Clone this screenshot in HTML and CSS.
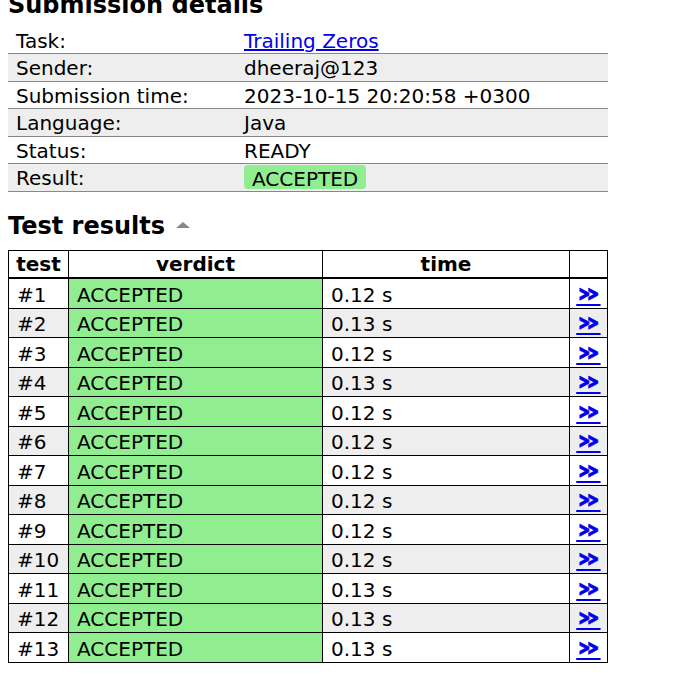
FILE: index.html
```html
<!DOCTYPE html>
<html>
<head>
<meta charset="utf-8">
<link rel="stylesheet" href="styles.css">
</head>
<body>
<h2 class="title first">Submission details</h2>
<table class="details">
  <tr><td class="label">Task:</td><td><a href="#">Trailing Zeros</a></td></tr>
  <tr class="alt"><td class="label">Sender:</td><td>dheeraj@123</td></tr>
  <tr><td class="label">Submission time:</td><td>2023-10-15 20:20:58 +0300</td></tr>
  <tr class="alt"><td class="label">Language:</td><td>Java</td></tr>
  <tr><td class="label">Status:</td><td>READY</td></tr>
  <tr class="alt"><td class="label">Result:</td><td><span class="badge">ACCEPTED</span></td></tr>
</table>
<h2 class="title second">Test results<span class="toggle"></span></h2>
<table class="tests">
  <thead>
    <tr><th class="c-test">test</th><th class="c-verdict">verdict</th><th class="c-time">time</th><th class="c-link"></th></tr>
  </thead>
  <tbody>
    <tr><td>#1</td><td class="ok">ACCEPTED</td><td>0.12 s</td><td class="lk"><a href="#">»</a></td></tr>
    <tr class="alt"><td>#2</td><td class="ok">ACCEPTED</td><td>0.13 s</td><td class="lk"><a href="#">»</a></td></tr>
    <tr><td>#3</td><td class="ok">ACCEPTED</td><td>0.12 s</td><td class="lk"><a href="#">»</a></td></tr>
    <tr class="alt"><td>#4</td><td class="ok">ACCEPTED</td><td>0.13 s</td><td class="lk"><a href="#">»</a></td></tr>
    <tr><td>#5</td><td class="ok">ACCEPTED</td><td>0.12 s</td><td class="lk"><a href="#">»</a></td></tr>
    <tr class="alt"><td>#6</td><td class="ok">ACCEPTED</td><td>0.12 s</td><td class="lk"><a href="#">»</a></td></tr>
    <tr><td>#7</td><td class="ok">ACCEPTED</td><td>0.12 s</td><td class="lk"><a href="#">»</a></td></tr>
    <tr class="alt"><td>#8</td><td class="ok">ACCEPTED</td><td>0.12 s</td><td class="lk"><a href="#">»</a></td></tr>
    <tr><td>#9</td><td class="ok">ACCEPTED</td><td>0.12 s</td><td class="lk"><a href="#">»</a></td></tr>
    <tr class="alt"><td>#10</td><td class="ok">ACCEPTED</td><td>0.12 s</td><td class="lk"><a href="#">»</a></td></tr>
    <tr><td>#11</td><td class="ok">ACCEPTED</td><td>0.13 s</td><td class="lk"><a href="#">»</a></td></tr>
    <tr class="alt"><td>#12</td><td class="ok">ACCEPTED</td><td>0.13 s</td><td class="lk"><a href="#">»</a></td></tr>
    <tr><td>#13</td><td class="ok">ACCEPTED</td><td>0.13 s</td><td class="lk"><a href="#">»</a></td></tr>
  </tbody>
</table>
</body>
</html>
```
FILE: styles.css
```css
html, body {
  background: #fff;
}
body {
  margin: 0;
  padding: 0 8px;
  font-family: "DejaVu Sans", Verdana, sans-serif;
  font-size: 20px;
  color: #000;
  overflow: hidden;
}
a {
  color: #0000ee;
  text-decoration: underline;
}
.title {
  font-size: 24px;
  font-weight: bold;
  line-height: 28px;
  margin: 0;
}
.first {
  margin-top: -9px;
  margin-bottom: 7.5px;
}
.second {
  margin-top: 20px;
  margin-bottom: 10.5px;
}
.toggle {
  display: inline-block;
  width: 0;
  height: 0;
  margin-left: 11px;
  border-left: 7px solid transparent;
  border-right: 7px solid transparent;
  border-bottom: 6px solid #888;
  vertical-align: 6px;
}
.details {
  width: 600px;
  border-collapse: separate;
  border-spacing: 0;
  table-layout: fixed;
}
.details td {
  padding: 3px 8px 0.5px;
  line-height: 23px;
  border-bottom: 1px solid #888;
  vertical-align: top;
  white-space: nowrap;
}
.details td.label {
  width: 228px;
  box-sizing: border-box;
}
.details tr.alt td {
  background: #eee;
}
.badge {
  display: inline-block;
  box-sizing: border-box;
  height: 23.6px;
  margin-top: -1.8px;
  padding: 4.3px 8px 0;
  line-height: 19.5px;
  background: #90ee90;
  border-radius: 4px;
  vertical-align: top;
}
.tests {
  width: 600px;
  border-collapse: separate;
  border-spacing: 0;
  table-layout: fixed;
  border-left: 1px solid #000;
  border-top: 1px solid #000;
}
.tests th, .tests td {
  box-sizing: border-box;
  border-right: 1px solid #000;
  border-bottom: 1px solid #000;
  white-space: nowrap;
}
.tests th {
  font-weight: bold;
  text-align: center;
  padding: 2px 0 1px;
  line-height: 23px;
  border-bottom-width: 2px;
}
.tests td {
  padding: 3.5px 8px 0.5px;
  line-height: 24.5px;
  text-align: left;
}
.c-test { width: 60px; }
.c-verdict { width: 254px; }
.c-time { width: 247px; }
.c-link { width: 38px; }
.tests tr.alt td {
  background: #eee;
}
.tests td.ok {
  background: #90ee90;
}
.tests tr.alt td.ok {
  background: #90ee90;
}
.tests td.lk {
  text-align: center;
  padding-left: 0;
  padding-right: 0;
}
.tests td.lk a {
  display: inline-block;
  font-weight: bold;
  font-size: 26px;
  line-height: 0;
  transform: scaleX(1.45);
  -webkit-text-stroke: 0.5px #0000ee;
}
```
